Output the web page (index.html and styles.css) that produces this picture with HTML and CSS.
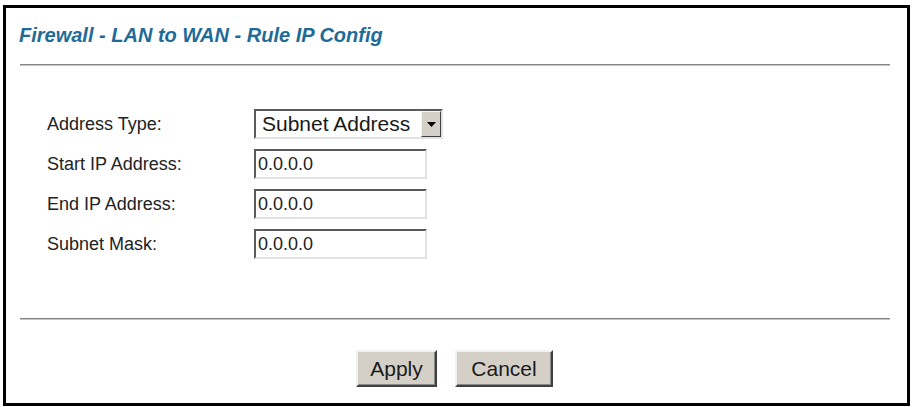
FILE: index.html
```html
<!DOCTYPE html>
<html lang="en">
<head>
<meta charset="utf-8">
<title>Firewall - LAN to WAN - Rule IP Config</title>
<link rel="stylesheet" href="styles.css">
</head>
<body>
<div class="frame">
  <h1 class="title">Firewall - LAN to WAN - Rule IP Config</h1>
  <div class="rule rule-top"></div>
  <div class="form">
    <label class="label">Address Type:</label>
    <div class="select">
      <span class="select-value">Subnet Address</span>
      <span class="select-btn">
        <svg width="9" height="5" viewBox="0 0 9 5"><path d="M0 0H9L4.5 5Z" fill="#000"/></svg>
      </span>
    </div>
    <label class="label">Start IP Address:</label>
    <input class="field" type="text" value="0.0.0.0">
    <label class="label">End IP Address:</label>
    <input class="field" type="text" value="0.0.0.0">
    <label class="label">Subnet Mask:</label>
    <input class="field" type="text" value="0.0.0.0">
  </div>
  <div class="rule rule-bottom"></div>
  <div class="actions">
    <button class="btn btn-apply" type="button">Apply</button>
    <button class="btn btn-cancel" type="button">Cancel</button>
  </div>
</div>
</body>
</html>
```

FILE: styles.css
```css
html, body {
  margin: 0;
  padding: 0;
  background: #ffffff;
}

body {
  font-family: "Liberation Sans", Arial, sans-serif;
  color: #222222;
}

.frame {
  margin: 5px 0 0 3px;
  width: 907px;
  height: 401px;
  box-sizing: border-box;
  border: 3px solid #000000;
  background: #ffffff;
}

.title {
  margin: 0;
  padding: 16px 0 0 13px;
  font-family: "Liberation Sans", Arial, sans-serif;
  font-size: 20px;
  font-weight: bold;
  font-style: italic;
  line-height: 23px;
  color: #1f6b97;
}

.rule {
  margin-left: 14px;
  width: 870px;
  height: 0;
  border-top: 1px solid #858585;
  border-bottom: 1px solid #c4c4c4;
}

.rule-top {
  margin-top: 17px;
}

.rule-bottom {
  margin-top: 54px;
}

.form {
  margin-top: 38px;
  padding-left: 41px;
  display: grid;
  grid-template-columns: 207px auto;
  grid-auto-rows: 40px;
  align-items: center;
  justify-items: start;
}

.label {
  font-size: 18px;
  color: #222222;
}

.select {
  display: flex;
  align-items: stretch;
  width: 189px;
  height: 30px;
  box-sizing: border-box;
  border: 2px solid;
  border-color: #5a5a5a #e2e2e2 #e2e2e2 #5a5a5a;
  background: #ffffff;
}

.select-value {
  flex: 1;
  display: flex;
  align-items: center;
  padding-left: 6px;
  font-size: 21px;
  color: #1a1a1a;
  white-space: nowrap;
}

.select-btn {
  width: 20px;
  display: flex;
  align-items: center;
  justify-content: center;
  box-sizing: border-box;
  background: #d4d0c8;
  border: 1px solid;
  border-color: #f4f4f4 #404040 #404040 #f4f4f4;
}

.field {
  width: 173px;
  height: 30px;
  box-sizing: border-box;
  margin: 0;
  padding: 0 2px;
  border: 2px solid;
  border-color: #5a5a5a #e2e2e2 #e2e2e2 #5a5a5a;
  font-family: "Liberation Sans", Arial, sans-serif;
  font-size: 18px;
  color: #222222;
  background: #ffffff;
  outline: none;
}

.actions {
  margin-top: 30px;
  padding-right: 4px;
  display: flex;
  justify-content: center;
  gap: 18px;
}

.btn {
  height: 37px;
  box-sizing: border-box;
  margin: 0;
  padding: 0;
  background: #d4d0c8;
  border: 2px solid;
  border-color: #f2f2f2 #404040 #404040 #f2f2f2;
  box-shadow: inset -1px -1px 0 #8a8a8a;
  font-family: "Liberation Sans", Arial, sans-serif;
  font-size: 21px;
  color: #1a1a1a;
}

.btn-apply {
  width: 81px;
}

.btn-cancel {
  width: 98px;
}
```
